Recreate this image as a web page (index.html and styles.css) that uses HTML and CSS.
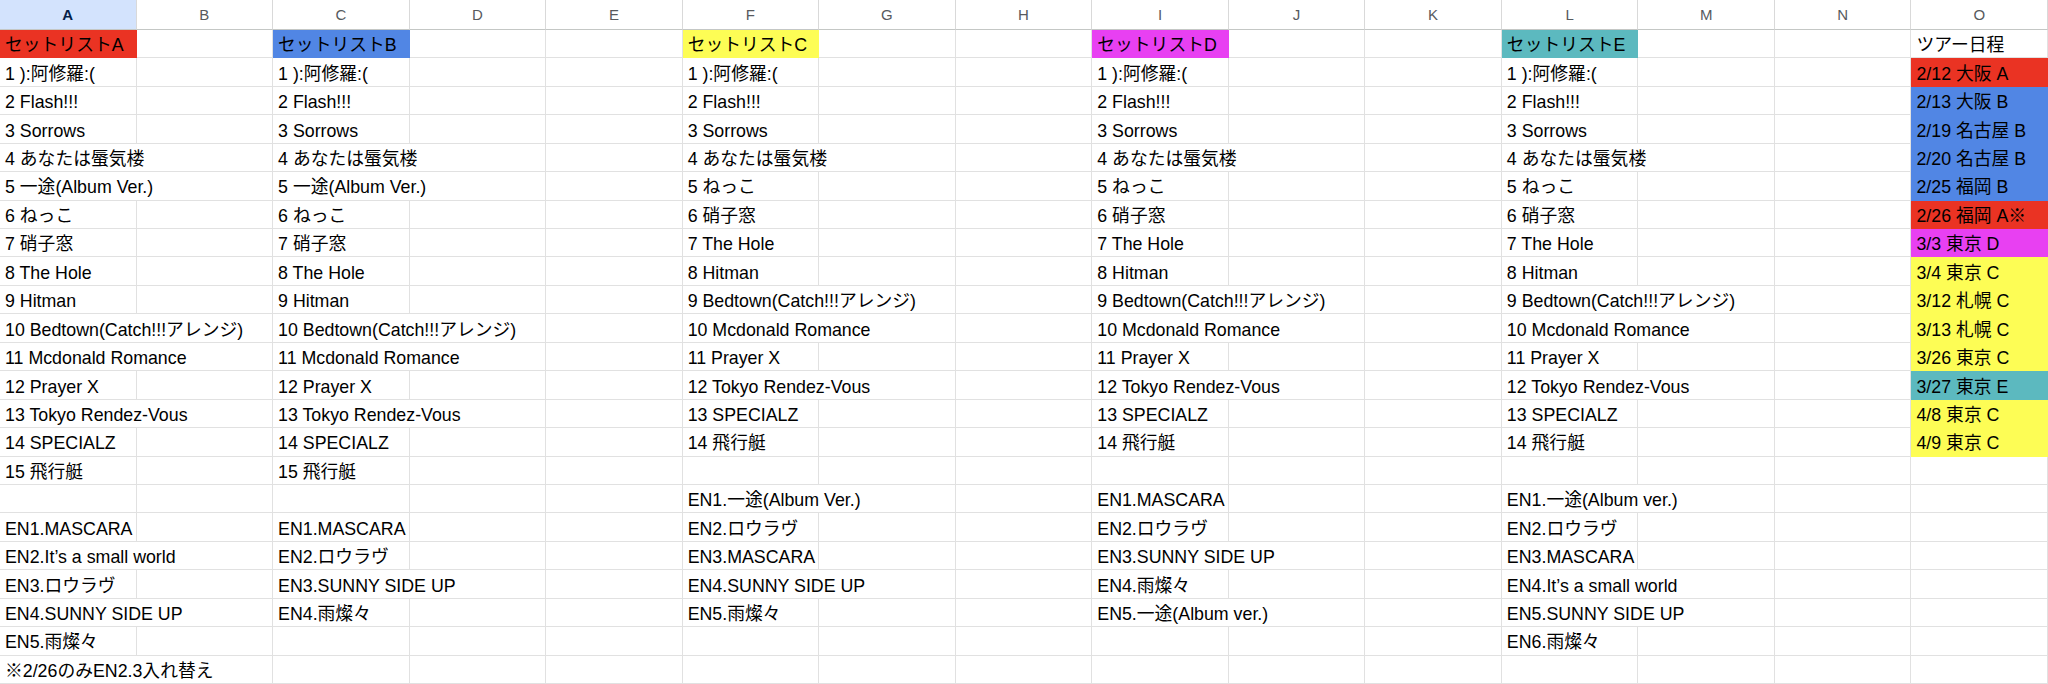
FILE: index.html
```html
<!DOCTYPE html>
<html lang="ja">
<head>
<meta charset="utf-8">
<title>セットリスト</title>
<link rel="stylesheet" href="styles.css">
</head>
<body>
<div class="sheet">
  <div class="h sel">A</div><div class="h">B</div><div class="h">C</div><div class="h">D</div><div class="h">E</div><div class="h">F</div><div class="h">G</div><div class="h">H</div><div class="h">I</div><div class="h">J</div><div class="h">K</div><div class="h">L</div><div class="h">M</div><div class="h">N</div><div class="h">O</div>

  <div class="c red">セットリストA</div><div class="c"></div><div class="c blue">セットリストB</div><div class="c"></div><div class="c"></div><div class="c yel">セットリストC</div><div class="c"></div><div class="c"></div><div class="c mag">セットリストD</div><div class="c"></div><div class="c"></div><div class="c teal">セットリストE</div><div class="c"></div><div class="c"></div><div class="c">ツアー日程</div>

  <div class="c">1 ):阿修羅:(</div><div class="c"></div><div class="c">1 ):阿修羅:(</div><div class="c"></div><div class="c"></div><div class="c">1 ):阿修羅:(</div><div class="c"></div><div class="c"></div><div class="c">1 ):阿修羅:(</div><div class="c"></div><div class="c"></div><div class="c">1 ):阿修羅:(</div><div class="c"></div><div class="c"></div><div class="c red">2/12 大阪 A</div>

  <div class="c">2 Flash!!!</div><div class="c"></div><div class="c">2 Flash!!!</div><div class="c"></div><div class="c"></div><div class="c">2 Flash!!!</div><div class="c"></div><div class="c"></div><div class="c">2 Flash!!!</div><div class="c"></div><div class="c"></div><div class="c">2 Flash!!!</div><div class="c"></div><div class="c"></div><div class="c blue">2/13 大阪 B</div>

  <div class="c">3 Sorrows</div><div class="c"></div><div class="c">3 Sorrows</div><div class="c"></div><div class="c"></div><div class="c">3 Sorrows</div><div class="c"></div><div class="c"></div><div class="c">3 Sorrows</div><div class="c"></div><div class="c"></div><div class="c">3 Sorrows</div><div class="c"></div><div class="c"></div><div class="c blue">2/19 名古屋 B</div>

  <div class="c s2">4 あなたは蜃気楼</div><div class="c s2">4 あなたは蜃気楼</div><div class="c"></div><div class="c s2">4 あなたは蜃気楼</div><div class="c"></div><div class="c s2">4 あなたは蜃気楼</div><div class="c"></div><div class="c s2">4 あなたは蜃気楼</div><div class="c"></div><div class="c blue">2/20 名古屋 B</div>

  <div class="c s2">5 一途(Album Ver.)</div><div class="c s2">5 一途(Album Ver.)</div><div class="c"></div><div class="c">5 ねっこ</div><div class="c"></div><div class="c"></div><div class="c">5 ねっこ</div><div class="c"></div><div class="c"></div><div class="c">5 ねっこ</div><div class="c"></div><div class="c"></div><div class="c blue">2/25 福岡 B</div>

  <div class="c">6 ねっこ</div><div class="c"></div><div class="c">6 ねっこ</div><div class="c"></div><div class="c"></div><div class="c">6 硝子窓</div><div class="c"></div><div class="c"></div><div class="c">6 硝子窓</div><div class="c"></div><div class="c"></div><div class="c">6 硝子窓</div><div class="c"></div><div class="c"></div><div class="c red">2/26 福岡 A※</div>

  <div class="c">7 硝子窓</div><div class="c"></div><div class="c">7 硝子窓</div><div class="c"></div><div class="c"></div><div class="c">7 The Hole</div><div class="c"></div><div class="c"></div><div class="c">7 The Hole</div><div class="c"></div><div class="c"></div><div class="c">7 The Hole</div><div class="c"></div><div class="c"></div><div class="c mag">3/3 東京 D</div>

  <div class="c">8 The Hole</div><div class="c"></div><div class="c">8 The Hole</div><div class="c"></div><div class="c"></div><div class="c">8 Hitman</div><div class="c"></div><div class="c"></div><div class="c">8 Hitman</div><div class="c"></div><div class="c"></div><div class="c">8 Hitman</div><div class="c"></div><div class="c"></div><div class="c yel">3/4 東京 C</div>

  <div class="c">9 Hitman</div><div class="c"></div><div class="c">9 Hitman</div><div class="c"></div><div class="c"></div><div class="c s2">9 Bedtown(Catch!!!アレンジ)</div><div class="c"></div><div class="c s2">9 Bedtown(Catch!!!アレンジ)</div><div class="c"></div><div class="c s2">9 Bedtown(Catch!!!アレンジ)</div><div class="c"></div><div class="c yel">3/12 札幌 C</div>

  <div class="c s2">10 Bedtown(Catch!!!アレンジ)</div><div class="c s2">10 Bedtown(Catch!!!アレンジ)</div><div class="c"></div><div class="c s2">10 Mcdonald Romance</div><div class="c"></div><div class="c s2">10 Mcdonald Romance</div><div class="c"></div><div class="c s2">10 Mcdonald Romance</div><div class="c"></div><div class="c yel">3/13 札幌 C</div>

  <div class="c s2">11 Mcdonald Romance</div><div class="c s2">11 Mcdonald Romance</div><div class="c"></div><div class="c">11 Prayer X</div><div class="c"></div><div class="c"></div><div class="c">11 Prayer X</div><div class="c"></div><div class="c"></div><div class="c">11 Prayer X</div><div class="c"></div><div class="c"></div><div class="c yel">3/26 東京 C</div>

  <div class="c">12 Prayer X</div><div class="c"></div><div class="c">12 Prayer X</div><div class="c"></div><div class="c"></div><div class="c s2">12 Tokyo Rendez-Vous</div><div class="c"></div><div class="c s2">12 Tokyo Rendez-Vous</div><div class="c"></div><div class="c s2">12 Tokyo Rendez-Vous</div><div class="c"></div><div class="c teal">3/27 東京 E</div>

  <div class="c s2">13 Tokyo Rendez-Vous</div><div class="c s2">13 Tokyo Rendez-Vous</div><div class="c"></div><div class="c">13 SPECIALZ</div><div class="c"></div><div class="c"></div><div class="c">13 SPECIALZ</div><div class="c"></div><div class="c"></div><div class="c">13 SPECIALZ</div><div class="c"></div><div class="c"></div><div class="c yel">4/8 東京 C</div>

  <div class="c">14 SPECIALZ</div><div class="c"></div><div class="c">14 SPECIALZ</div><div class="c"></div><div class="c"></div><div class="c">14 飛行艇</div><div class="c"></div><div class="c"></div><div class="c">14 飛行艇</div><div class="c"></div><div class="c"></div><div class="c">14 飛行艇</div><div class="c"></div><div class="c"></div><div class="c yel">4/9 東京 C</div>

  <div class="c">15 飛行艇</div><div class="c"></div><div class="c">15 飛行艇</div><div class="c"></div><div class="c"></div><div class="c"></div><div class="c"></div><div class="c"></div><div class="c"></div><div class="c"></div><div class="c"></div><div class="c"></div><div class="c"></div><div class="c"></div><div class="c"></div>

  <div class="c"></div><div class="c"></div><div class="c"></div><div class="c"></div><div class="c"></div><div class="c s2">EN1.一途(Album Ver.)</div><div class="c"></div><div class="c">EN1.MASCARA</div><div class="c"></div><div class="c"></div><div class="c s2">EN1.一途(Album ver.)</div><div class="c"></div><div class="c"></div>

  <div class="c">EN1.MASCARA</div><div class="c"></div><div class="c">EN1.MASCARA</div><div class="c"></div><div class="c"></div><div class="c">EN2.ロウラヴ</div><div class="c"></div><div class="c"></div><div class="c">EN2.ロウラヴ</div><div class="c"></div><div class="c"></div><div class="c">EN2.ロウラヴ</div><div class="c"></div><div class="c"></div><div class="c"></div>

  <div class="c s2">EN2.It’s a small world</div><div class="c">EN2.ロウラヴ</div><div class="c"></div><div class="c"></div><div class="c">EN3.MASCARA</div><div class="c"></div><div class="c"></div><div class="c s2">EN3.SUNNY SIDE UP</div><div class="c"></div><div class="c">EN3.MASCARA</div><div class="c"></div><div class="c"></div><div class="c"></div>

  <div class="c">EN3.ロウラヴ</div><div class="c"></div><div class="c s2">EN3.SUNNY SIDE UP</div><div class="c"></div><div class="c s2">EN4.SUNNY SIDE UP</div><div class="c"></div><div class="c">EN4.雨燦々</div><div class="c"></div><div class="c"></div><div class="c s2">EN4.It’s a small world</div><div class="c"></div><div class="c"></div>

  <div class="c s2">EN4.SUNNY SIDE UP</div><div class="c">EN4.雨燦々</div><div class="c"></div><div class="c"></div><div class="c">EN5.雨燦々</div><div class="c"></div><div class="c"></div><div class="c s2">EN5.一途(Album ver.)</div><div class="c"></div><div class="c s2">EN5.SUNNY SIDE UP</div><div class="c"></div><div class="c"></div>

  <div class="c">EN5.雨燦々</div><div class="c"></div><div class="c"></div><div class="c"></div><div class="c"></div><div class="c"></div><div class="c"></div><div class="c"></div><div class="c"></div><div class="c"></div><div class="c"></div><div class="c">EN6.雨燦々</div><div class="c"></div><div class="c"></div><div class="c"></div>

  <div class="c s2">※2/26のみEN2.3入れ替え</div><div class="c"></div><div class="c"></div><div class="c"></div><div class="c"></div><div class="c"></div><div class="c"></div><div class="c"></div><div class="c"></div><div class="c"></div><div class="c"></div><div class="c"></div><div class="c"></div><div class="c"></div>
</div>
</body>
</html>
```

FILE: styles.css
```css
* {
  box-sizing: border-box;
}

body {
  margin: 0;
  background: #ffffff;
}

.sheet {
  display: grid;
  grid-template-columns: repeat(15, 1fr);
  grid-template-rows: 30px repeat(23, 1fr);
  width: 2048px;
  height: 684px;
  font-family: "Liberation Sans", "Noto Sans CJK JP", sans-serif;
  font-size: 17.8px;
  color: #000000;
  background: #ffffff;
  overflow: hidden;
}

.h {
  display: flex;
  align-items: center;
  justify-content: center;
  font-size: 15px;
  color: #575a5e;
  background: #ffffff;
  border-right: 1px solid #d9d9d9;
  border-bottom: 1px solid #c4c7c5;
}

.h.sel {
  background: #d3e3fd;
  color: #041e49;
  font-weight: bold;
}

.c {
  display: flex;
  align-items: center;
  min-width: 0;
  padding-left: 5px;
  padding-top: 5px;
  line-height: 1;
  white-space: nowrap;
  border-right: 1px solid #e1e1e1;
  border-bottom: 1px solid #e1e1e1;
}

.s2 {
  grid-column: span 2;
}

.red {
  background: #ea3323;
  border-color: #ea3323;
}

.blue {
  background: #5186e4;
  border-color: #5186e4;
}

.yel {
  background: #fdfd55;
  border-color: #fdfd55;
}

.mag {
  background: #e840f2;
  border-color: #e840f2;
}

.teal {
  background: #5cb9bf;
  border-color: #5cb9bf;
}
```
